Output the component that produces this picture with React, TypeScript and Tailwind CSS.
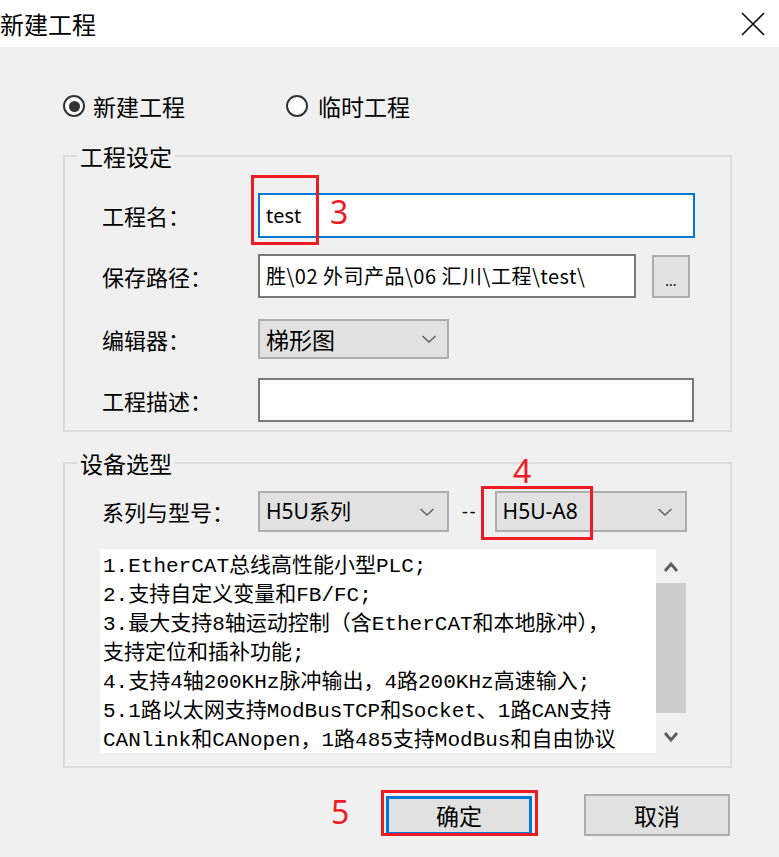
import React from "react"

const ui = { fontFamily: '"Noto Sans CJK SC", "Noto Sans", sans-serif' }
const latin = { fontFamily: '"Noto Sans", "Noto Sans CJK SC", sans-serif' }
const mono = { fontFamily: '"Liberation Mono", "Noto Sans CJK SC", monospace' }

function Chevron() {
  return (
    <svg width="16" height="10" viewBox="0 0 16 10" className="shrink-0">
      <polyline points="1.5,2 8,8 14.5,2" fill="none" stroke="#606060" strokeWidth="1.5" />
    </svg>
  )
}

function Radio({ checked }: { checked?: boolean }) {
  return (
    <span className="flex h-[22px] w-[22px] items-center justify-center rounded-full border-2 border-[#333] bg-white">
      {checked && <span className="h-[11px] w-[11px] rounded-full bg-[#333]" />}
    </span>
  )
}

function Select({ value, width }: { value: string; width: string }) {
  return (
    <div className={`flex h-[41px] items-center justify-between border-2 border-[#adadad] bg-[#e1e1e1] pl-[6px] pr-[12px] ${width}`}>
      <span className="text-[21px] leading-none text-black" style={latin}>{value}</span>
      <Chevron />
    </div>
  )
}

const lines = [
  "1.EtherCAT总线高性能小型PLC;",
  "2.支持自定义变量和FB/FC;",
  "3.最大支持8轴运动控制（含EtherCAT和本地脉冲），",
  "支持定位和插补功能;",
  "4.支持4轴200KHz脉冲输出，4路200KHz高速输入;",
  "5.1路以太网支持ModBusTCP和Socket、1路CAN支持",
  "CANlink和CANopen，1路485支持ModBus和自由协议",
]

export default function App() {
  return (
    <div className="relative flex h-[857px] w-[779px] flex-col overflow-hidden bg-[#f0f0f0] text-black" style={ui}>
      {/* Title bar */}
      <div className="flex h-[47px] shrink-0 items-center justify-between bg-white">
        <span className="text-[24px] leading-none">新建工程</span>
        <svg width="26" height="26" viewBox="0 0 26 26" className="mr-[13px]">
          <path d="M2 2 L24 24 M24 2 L2 24" stroke="#111" strokeWidth="1.6" />
        </svg>
      </div>

      {/* Radio row */}
      <div className="mt-[47px] flex items-center pl-[63px] text-[23px] leading-[24px]">
        <Radio checked />
        <span className="ml-[8px]">新建工程</span>
        <span className="ml-[101px]"><Radio /></span>
        <span className="ml-[10px]">临时工程</span>
      </div>

      {/* 工程设定 */}
      <fieldset className="ml-[63px] mt-[26px] w-[669px] border-2 border-[#dcdcdc] pb-[8px]">
        <legend className="ml-[12px] px-[3px] text-[23px] leading-[24px]">工程设定</legend>
        <div className="flex flex-col pl-[37px] text-[22px]">
          <div className="mt-[25px] flex items-center">
            <span className="w-[156px]">工程名：</span>
            <div className="flex h-[45px] w-[437px] items-center border-2 border-[#0078d7] bg-white pl-[6px]">
              <span className="text-[20px]" style={latin}>test</span>
            </div>
          </div>
          <div className="mt-[16px] flex items-center">
            <span className="w-[156px]">保存路径：</span>
            <div className="flex h-[44px] w-[378px] items-center overflow-hidden border-2 border-[#7a7a7a] bg-white pl-[6px]">
              <span className="whitespace-nowrap text-[20px] tracking-[0.5px]">胜\02 外司产品\06 汇川\工程\test\</span>
            </div>
            <div className="ml-[16px] flex h-[43px] w-[38px] items-end justify-center border-2 border-[#adadad] bg-[#e1e1e1] pb-[8px]">
              <span className="text-[14px] leading-none" style={latin}>...</span>
            </div>
          </div>
          <div className="mt-[21px] flex items-center">
            <span className="w-[156px]">编辑器：</span>
            <div className="flex h-[40px] w-[191px] items-center justify-between border-2 border-[#adadad] bg-[#e1e1e1] pl-[6px] pr-[10px]">
              <span className="text-[23px] leading-none">梯形图</span>
              <Chevron />
            </div>
          </div>
          <div className="mt-[19px] flex items-center">
            <span className="w-[156px]">工程描述：</span>
            <div className="h-[44px] w-[436px] border-2 border-[#7a7a7a] bg-white" />
          </div>
        </div>
      </fieldset>

      {/* 设备选型 */}
      <fieldset className="ml-[63px] mt-[19px] w-[669px] border-2 border-[#dcdcdc] pb-[13px]">
        <legend className="ml-[12px] px-[3px] text-[23px] leading-[24px]">设备选型</legend>
        <div className="mt-[16px] flex items-center pl-[37px] text-[22px]">
          <span className="w-[156px]">系列与型号：</span>
          <Select value="H5U系列" width="w-[191px]" />
          <span className="ml-[13px] mr-[17px] text-[18px] tracking-[2px]" style={latin}>--</span>
          <Select value="H5U-A8" width="w-[192px]" />
        </div>
        <div className="ml-[35px] mt-[17px] flex h-[204px] w-[586px]">
          <div className="flex-1 overflow-hidden bg-white pl-[3px] pt-[3px] text-[21px] leading-[29px]" style={mono}>
            {lines.map((l) => (
              <div key={l} className="whitespace-nowrap">{l}</div>
            ))}
          </div>
          <div className="flex w-[30px] flex-col items-center bg-[#f0f0f0]">
            <svg width="16" height="12" viewBox="0 0 16 12" className="mt-[12px]">
              <polyline points="2,10 8,3 14,10" fill="none" stroke="#606060" strokeWidth="3" />
            </svg>
            <div className="mt-[10px] h-[130px] w-full bg-[#cdcdcd]" />
            <svg width="16" height="12" viewBox="0 0 16 12" className="mt-[18px]">
              <polyline points="2,2 8,9 14,2" fill="none" stroke="#606060" strokeWidth="3" />
            </svg>
          </div>
        </div>
      </fieldset>

      {/* Buttons */}
      <div className="mt-[26px] flex items-center pl-[386px] text-[23px]">
        <div className="flex h-[39px] w-[146px] items-center justify-center border-[3px] border-[#0078d7] bg-[#e1e1e1]">确定</div>
        <div className="ml-[52px] flex h-[42px] w-[146px] items-center justify-center border-2 border-[#adadad] bg-[#e1e1e1]">取消</div>
      </div>

      {/* Red annotations */}
      <div className="absolute left-[251px] top-[175px] h-[70px] w-[68px] border-[3px] border-[#ed1c24]" />
      <span className="absolute left-[330px] top-[193px] text-[32px] leading-[38px] text-[#ed1c24]" style={latin}>3</span>
      <div className="absolute left-[481px] top-[486px] h-[54px] w-[112px] border-[3px] border-[#ed1c24]" />
      <span className="absolute left-[513px] top-[452px] text-[32px] leading-[38px] text-[#ed1c24]" style={latin}>4</span>
      <div className="absolute left-[381px] top-[790px] h-[46px] w-[157px] border-[3px] border-[#ed1c24]" />
      <span className="absolute left-[331px] top-[793px] text-[32px] leading-[38px] text-[#ed1c24]" style={latin}>5</span>
    </div>
  )
}
